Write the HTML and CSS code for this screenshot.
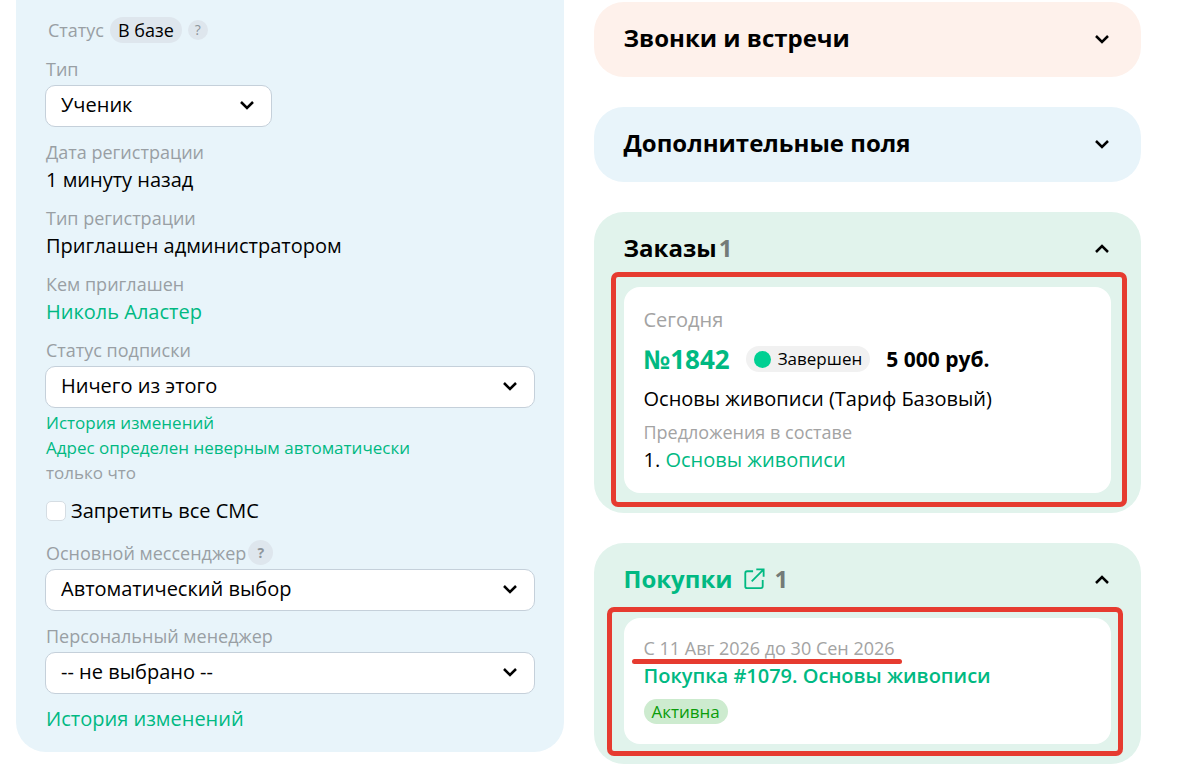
FILE: index.html
```
<!DOCTYPE html>
<html lang="ru">
<head>
    <meta charset="UTF-8">
    <meta name="viewport" content="width=device-width, initial-scale=1.0">
    <title>Карточка ученика</title>
    <link rel="stylesheet" href="styles.css">
</head>
<body>
    <main class="page">
        <section class="profile">
            <div class="status-row">
                <span class="label">Статус</span>
                <span class="chip">В базе</span>
                <button class="help" type="button">?</button>
            </div>
            <div class="field has-select">
                <label class="label" for="type">Тип</label>
                <div class="select short">
                    <select id="type"><option>Ученик</option></select>
                    <svg class="chevron" viewBox="0 0 16 10"><path d="M2 2l6 6 6-6"/></svg>
                </div>
            </div>
            <div class="field">
                <div class="label">Дата регистрации</div>
                <div>1 минуту назад</div>
            </div>
            <div class="field">
                <div class="label">Тип регистрации</div>
                <div>Приглашен администратором</div>
            </div>
            <div class="field">
                <div class="label">Кем приглашен</div>
                <a href="#">Николь Аластер</a>
            </div>
            <div class="field has-select">
                <label class="label" for="subscription">Статус подписки</label>
                <div class="select">
                    <select id="subscription"><option>Ничего из этого</option></select>
                    <svg class="chevron" viewBox="0 0 16 10"><path d="M2 2l6 6 6-6"/></svg>
                </div>
                <div class="history">
                    <a href="#">История изменений</a>
                    <a href="#">Адрес определен неверным автоматически</a>
                    <span>только что</span>
                </div>
            </div>
            <div class="check">
                <input type="checkbox" id="no-sms">
                <label for="no-sms">Запретить все СМС</label>
            </div>
            <div class="field has-select">
                <div class="label-row">
                    <label class="label" for="messenger">Основной мессенджер</label>
                    <button class="help big" type="button">?</button>
                </div>
                <div class="select">
                    <select id="messenger"><option>Автоматический выбор</option></select>
                    <svg class="chevron" viewBox="0 0 16 10"><path d="M2 2l6 6 6-6"/></svg>
                </div>
            </div>
            <div class="field has-select">
                <label class="label" for="manager">Персональный менеджер</label>
                <div class="select">
                    <select id="manager"><option>-- не выбрано --</option></select>
                    <svg class="chevron" viewBox="0 0 16 10"><path d="M2 2l6 6 6-6"/></svg>
                </div>
            </div>
            <a href="#">История изменений</a>
        </section>

        <div class="blocks">
            <section class="block calls">
                <header class="block-head">
                    <h2>Звонки и встречи</h2>
                    <button class="toggle" type="button" aria-label="Развернуть">
                        <svg class="chevron" viewBox="0 0 16 10"><path d="M2 2l6 6 6-6"/></svg>
                    </button>
                </header>
            </section>

            <section class="block extra">
                <header class="block-head">
                    <h2>Дополнительные поля</h2>
                    <button class="toggle" type="button" aria-label="Развернуть">
                        <svg class="chevron" viewBox="0 0 16 10"><path d="M2 2l6 6 6-6"/></svg>
                    </button>
                </header>
            </section>

            <section class="block deals">
                <header class="block-head">
                    <h2 class="orders-title">Заказы <span class="count">1</span></h2>
                    <button class="toggle" type="button" aria-label="Свернуть">
                        <svg class="chevron" viewBox="0 0 16 10"><path d="M2 8l6-6 6 6"/></svg>
                    </button>
                </header>
                <article class="card order">
                    <div class="muted">Сегодня</div>
                    <div class="order-row">
                        <a class="order-number" href="#">№1842</a>
                        <span class="order-status">Завершен</span>
                        <b class="price">5 000 руб.</b>
                    </div>
                    <div class="order-title">Основы живописи (Тариф Базовый)</div>
                    <div class="muted small">Предложения в составе</div>
                    <div>1. <a href="#">Основы живописи</a></div>
                    <div class="frame order-frame"></div>
                </article>
            </section>

            <section class="block deals">
                <header class="block-head">
                    <h2 class="with-icon">
                        <a href="#">Покупки
                            <svg class="external" viewBox="0 0 24 24"><path d="M11 3.500H4.500Q2.500 3.500 2.500 5.500V20.500Q2.500 22 4.500 22H19.500Q21.500 22 21.500 20V13M14.500 1.500H22.500V9.500M22.500 1.500L9.500 14.500"/></svg></a>
                        <span class="count">1</span>
                    </h2>
                    <button class="toggle" type="button" aria-label="Свернуть">
                        <svg class="chevron" viewBox="0 0 16 10"><path d="M2 8l6-6 6 6"/></svg>
                    </button>
                </header>
                <article class="card purchase">
                    <div class="muted small period">С 11 Авг 2026 до 30 Сен 2026</div>
                    <a class="purchase-title" href="#">Покупка #1079. Основы живописи</a>
                    <span class="active">Активна</span>
                    <div class="frame purchase-frame"></div>
                </article>
            </section>
        </div>
    </main>
</body>
</html>
```
FILE: styles.css
```
* {
    box-sizing: border-box;
}
body {
    margin: 0;
    background: #fff;
    color: #000;
    font-family: "Open Sans", "Noto Sans", sans-serif;
    font-size: 20px;
    line-height: 28px;
}
a {
    color: #00b982;
    text-decoration: none;
}
button, select, input {
    font: inherit;
    margin: 0;
}
.page {
    display: grid;
    grid-template-columns: 1fr 1fr;
    gap: 30px;
    align-items: start;
    padding: 0 47px 12px 16px;
}

/* left column */
.profile {
    padding: 17px 30px 19px;
    border-radius: 0 0 30px 30px;
    background: #e8f4fa;
}
.label {
    display: block;
    color: #999fa4;
    font-size: 18px;
}
.status-row {
    display: flex;
    align-items: center;
    gap: 6px;
    height: 26px;
    margin-bottom: 12px;
    padding-left: 2px;
}
.chip {
    padding: 0 8px;
    border-radius: 13px;
    background: #dee6ed;
    font-size: 18px;
    line-height: 26px;
}
.help {
    width: 20px;
    height: 20px;
    padding: 0;
    border: 0;
    border-radius: 50%;
    background: #dee6ed;
    color: #8d959b;
    font-size: 14px;
    line-height: 20px;
}
.help.big {
    width: 25px;
    height: 25px;
    font-weight: 700;
}
.label-row {
    display: flex;
    align-items: center;
    gap: 2px;
    height: 29px;
}
.label-row .label {
    line-height: 26px;
}
.field {
    margin-bottom: 10px;
}
.field.has-select {
    margin-bottom: 11px;
}
.select {
    position: relative;
    margin: 2px -1px 0;
}
.select.short {
    max-width: 227px;
}
.select select {
    display: block;
    width: 100%;
    height: 42px;
    padding: 0 40px 2px 15px;
    border: 1px solid #c5d0da;
    border-radius: 10px;
    background: #fff;
    color: #000;
    appearance: none;
}
.chevron {
    display: block;
    width: 16px;
    height: 10px;
    fill: none;
    stroke: #000;
    stroke-width: 2.5px;
}
.select .chevron {
    position: absolute;
    right: 17px;
    top: 15px;
    pointer-events: none;
}
.history {
    display: flex;
    flex-direction: column;
    margin-top: 2px;
    padding-bottom: 1px;
    color: #999fa4;
    font-size: 17px;
    line-height: 25px;
}
.check {
    display: flex;
    align-items: center;
    gap: 5px;
    margin-bottom: 13px;
}
.check input {
    width: 20px;
    height: 20px;
    border: 1px solid #d5dde3;
    border-radius: 5px;
    background: #fff;
    appearance: none;
}

/* right column */
.blocks {
    display: flex;
    flex-direction: column;
    gap: 30px;
    padding-top: 2px;
}
.block {
    padding: 0 30px;
    border-radius: 30px;
}
.calls {
    background: #fef1eb;
}
.extra {
    background: #e8f4fa;
}
.deals {
    padding-bottom: 20px;
    background: #e1f3ec;
}
.block-head {
    display: flex;
    align-items: center;
    justify-content: space-between;
    height: 75px;
}
h2 {
    margin: 0;
    padding-bottom: 4px;
    font-size: 24px;
    line-height: 32px;
}
.orders-title {
    display: flex;
    gap: 2px;
}
.count {
    color: #737b78;
}
.with-icon {
    display: flex;
    gap: 10px;
}
.with-icon a {
    display: flex;
    align-items: center;
    gap: 10px;
}
.external {
    width: 22px;
    height: 22px;
    fill: none;
    stroke: #00b982;
    stroke-width: 2px;
}
.toggle {
    padding: 0 1px 1px 0;
    border: 0;
    background: none;
}
.card {
    position: relative;
    padding: 19px 20px;
    border-radius: 16px;
    background: #fff;
}
.muted {
    color: #a3a3a3;
}
.small {
    font-size: 18px;
}
.order-row {
    display: flex;
    align-items: center;
    gap: 16px;
    height: 28px;
    margin: 11px 0 12px;
}
.order-number {
    font-size: 26px;
    font-weight: 700;
}
.order-status {
    display: flex;
    align-items: center;
    gap: 7px;
    padding: 0 8px;
    border-radius: 13px;
    background: #f1f1f1;
    font-size: 17px;
    line-height: 26px;
}
.order-status::before {
    content: "";
    width: 17px;
    height: 17px;
    border-radius: 50%;
    background: #00d093;
}
.price {
    font-size: 21px;
}
.order-title {
    margin-bottom: 5px;
}
.purchase {
    padding: 16px 20px 20px;
}
.period {
    position: relative;
    width: fit-content;
}
.period::after {
    content: "";
    position: absolute;
    left: -12px;
    right: -7px;
    bottom: -2px;
    height: 5px;
    border-radius: 3px;
    background: #e63b30;
}
.purchase-title {
    display: block;
    font-weight: 600;
}
.active {
    display: block;
    width: fit-content;
    margin-top: 9px;
    padding: 0 8px;
    border-radius: 13px;
    background: #cdebcf;
    color: #0a9c0a;
    font-size: 17px;
    line-height: 25px;
}
.frame {
    position: absolute;
    border: 5px solid #e63b30;
    border-radius: 7px;
    pointer-events: none;
}
.order-frame {
    inset: -15px -16px -14px -13px;
}
.purchase-frame {
    inset: -11px -12px -12px -17px;
}
```
